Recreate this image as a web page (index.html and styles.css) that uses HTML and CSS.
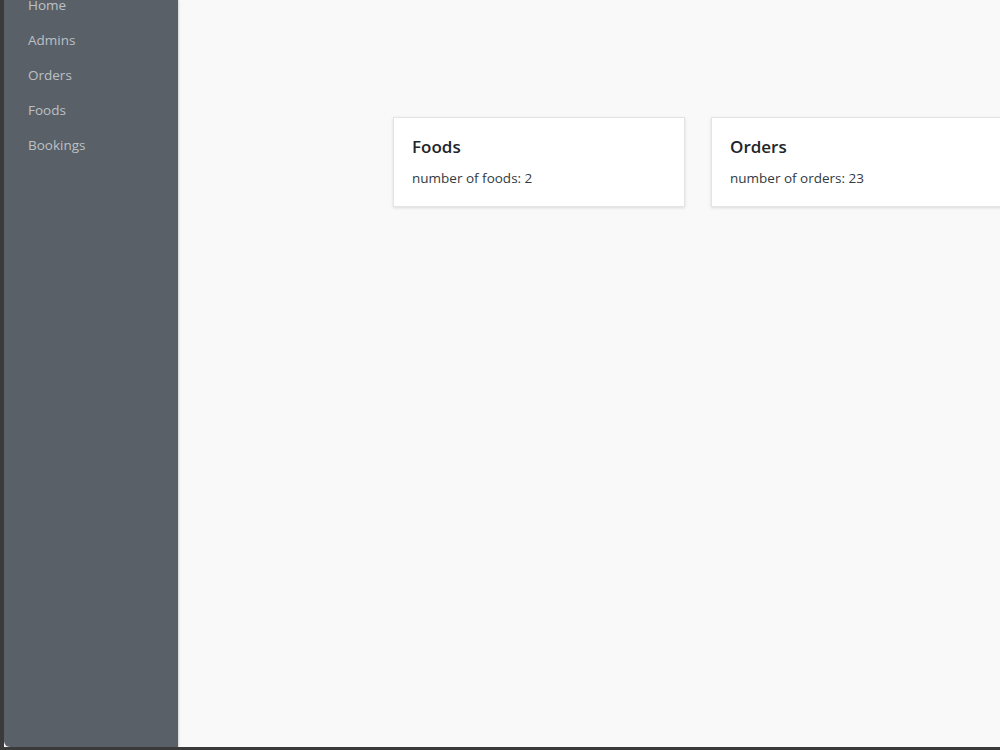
FILE: index.html
```html
<!DOCTYPE html>
<html>
<head>
<meta charset="utf-8">
<link rel="stylesheet" href="styles.css">
</head>
<body>
<div class="frame">
  <div class="app">
    <aside class="sidebar">
      <ul class="nav">
        <li><a href="#">Home</a></li>
        <li><a href="#">Admins</a></li>
        <li><a href="#">Orders</a></li>
        <li><a href="#">Foods</a></li>
        <li><a href="#">Bookings</a></li>
      </ul>
    </aside>
    <main class="main">
      <div class="cards">
        <div class="card">
          <h3 class="card-title">Foods</h3>
          <p class="card-text">number of foods: 2</p>
        </div>
        <div class="card">
          <h3 class="card-title">Orders</h3>
          <p class="card-text">number of orders: 23</p>
        </div>
      </div>
    </main>
  </div>
</div>
</body>
</html>
```
FILE: styles.css
```css
html, body {
  margin: 0;
  padding: 0;
  height: 100%;
  overflow: hidden;
}
body {
  background: #3a3a3a;
  font-family: "Open Sans", "Noto Sans", sans-serif;
}
.frame {
  height: 750px;
  box-sizing: border-box;
  padding: 0 0 3px 4px;
}
.app {
  display: flex;
  height: 100%;
  background: #f9f9f9;
  overflow: hidden;
}
.sidebar {
  width: 174px;
  flex: none;
  background: #5a6068;
  border-bottom-left-radius: 6px;
  box-shadow: 1px 0 2px rgba(0,0,0,0.15);
  position: relative;
  z-index: 1;
}
.nav {
  list-style: none;
  margin: -13px 0 0 0;
  padding: 0;
}
.nav li {
  height: 35px;
  display: flex;
  align-items: center;
  padding-left: 24px;
}
.nav a {
  color: #bcc0c5;
  text-decoration: none;
  font-size: 13.5px;
}
.main {
  flex: 1;
  padding: 117px 0 0 215px;
  min-width: 0;
}
.cards {
  display: flex;
  gap: 26px;
}
.card {
  width: 292px;
  flex: none;
  height: 90px;
  box-sizing: border-box;
  background: #fff;
  border: 1px solid #e4e4e4;
  box-shadow: 0 1px 3px rgba(0,0,0,0.12);
  padding: 17px 18px;
}
.card-title {
  margin: 0;
  font-size: 17px;
  font-weight: 600;
  color: #212529;
  line-height: 24px;
}
.card-text {
  margin: 9px 0 0;
  font-size: 13.5px;
  color: #333a40;
  line-height: 20px;
}
```
